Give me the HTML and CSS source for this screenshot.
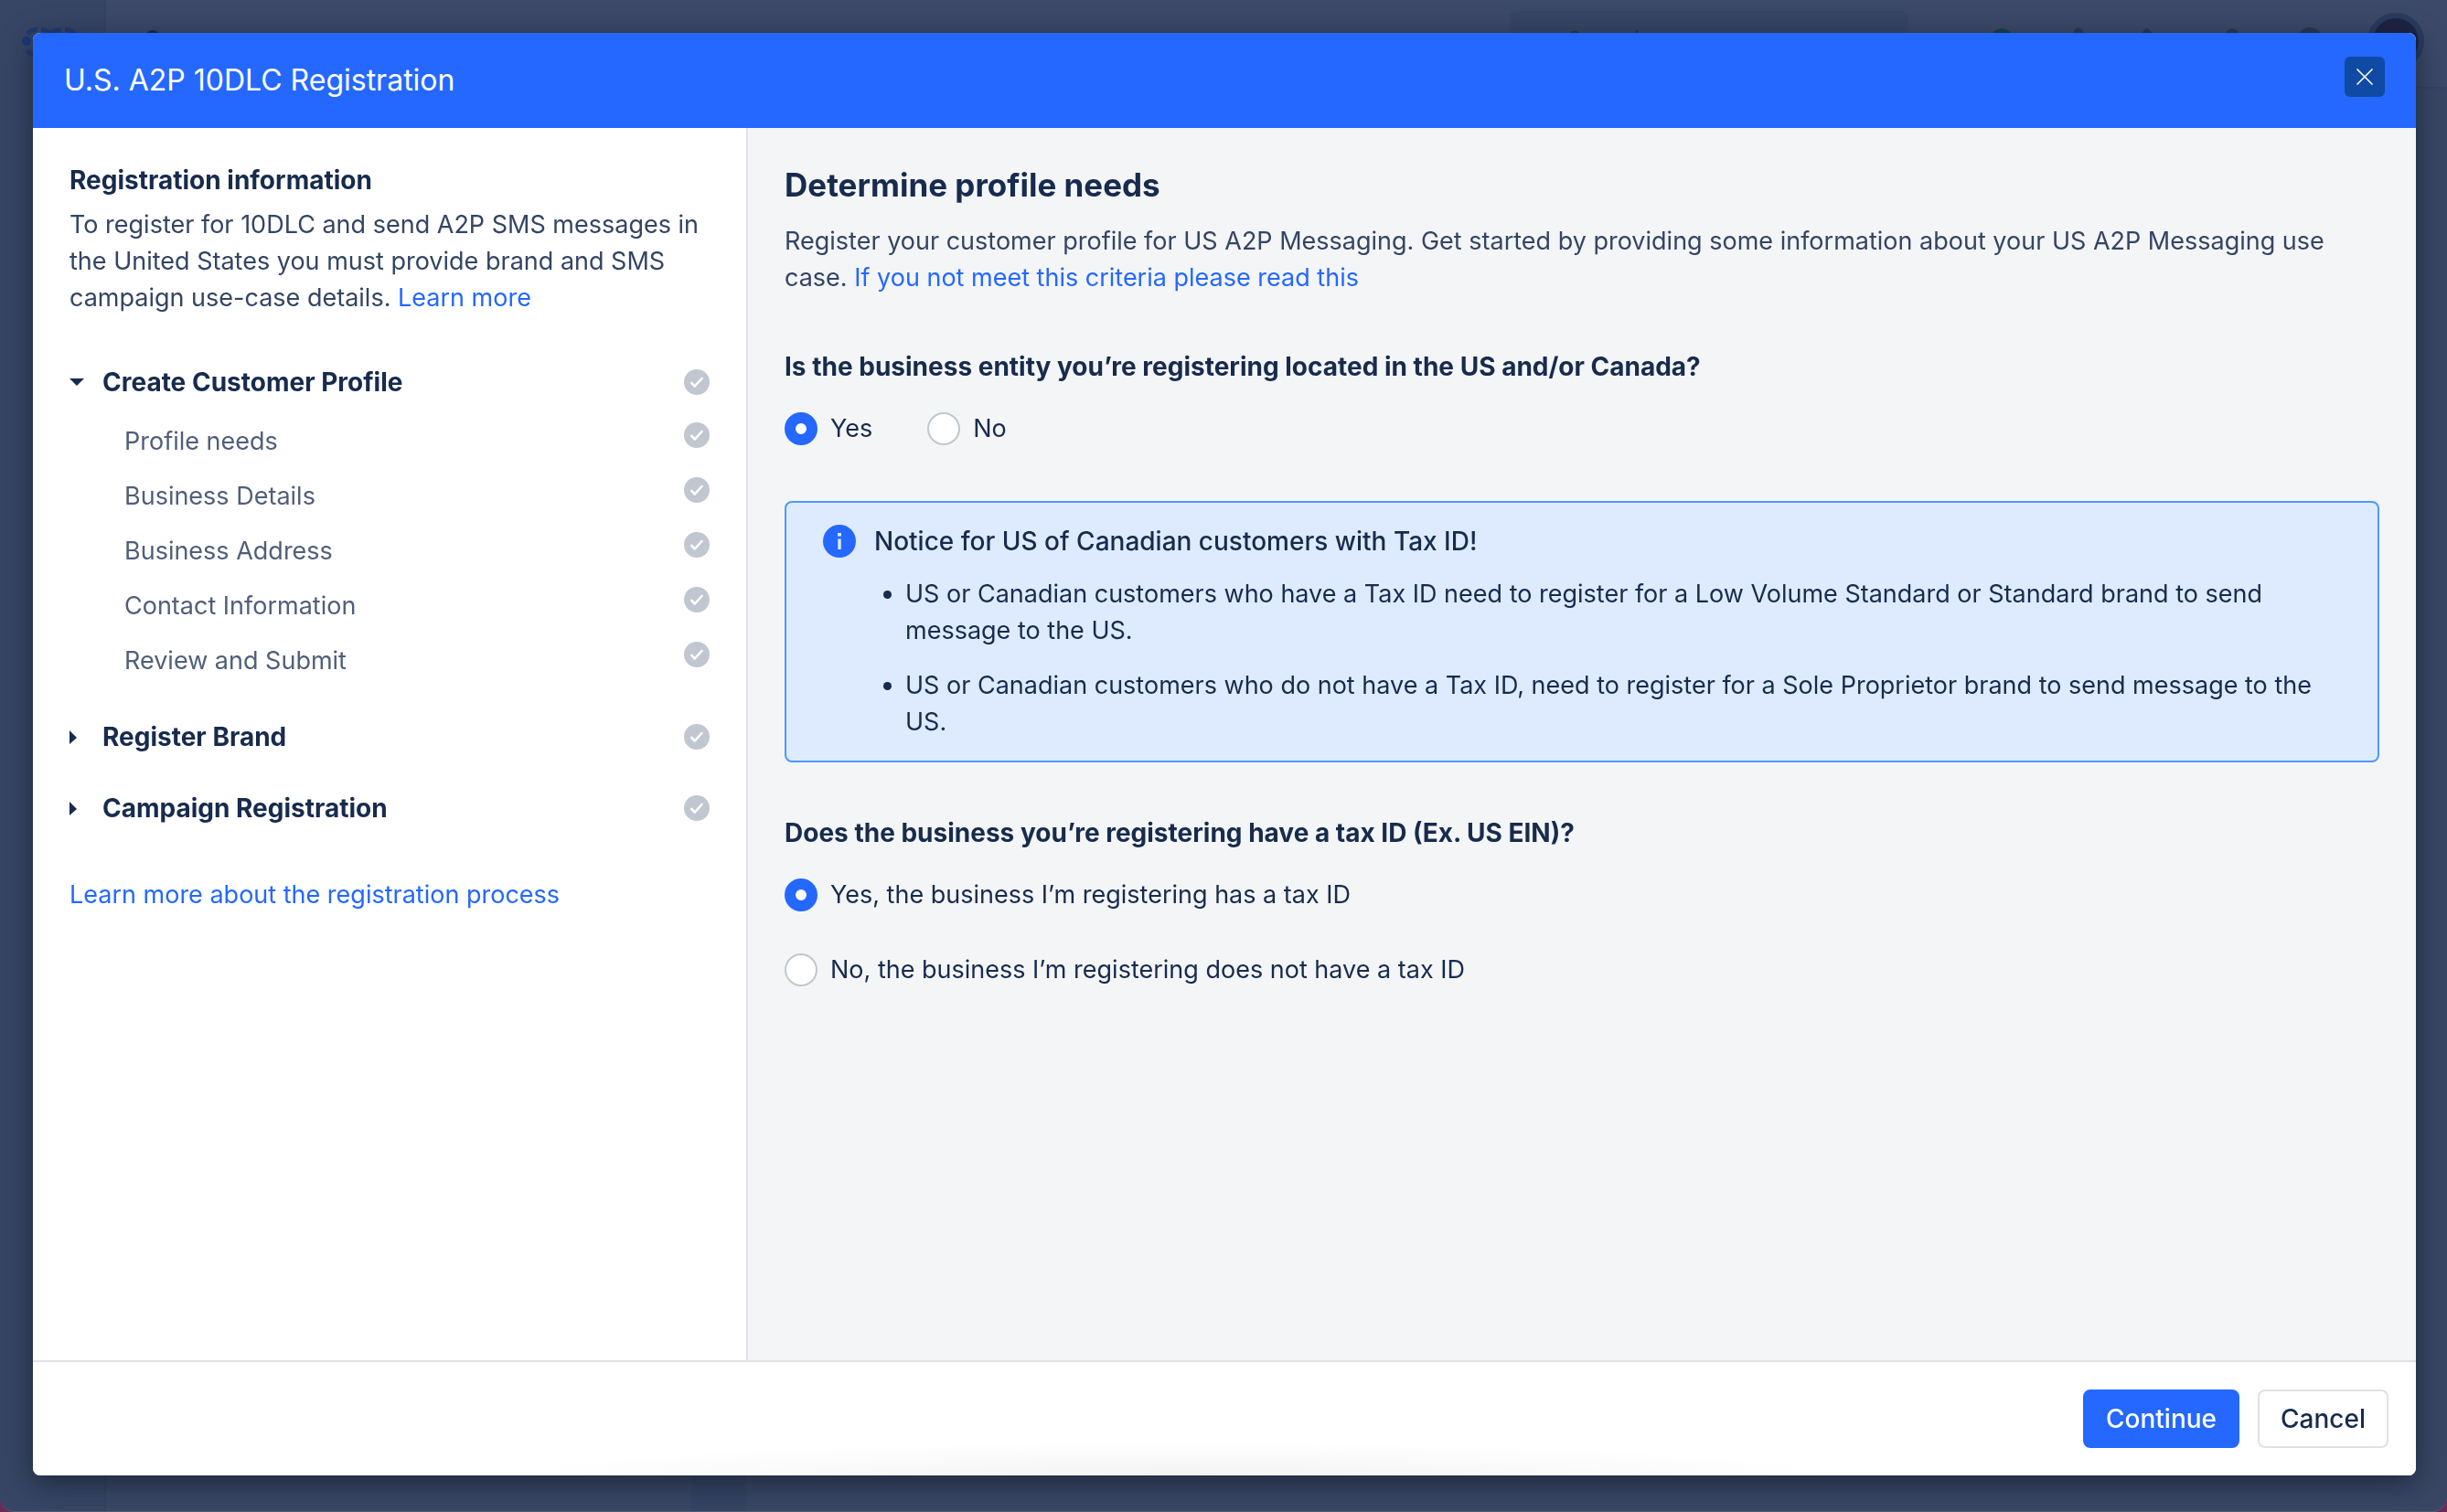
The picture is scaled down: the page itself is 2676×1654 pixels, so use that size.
FILE: index.html
```html
<!DOCTYPE html>
<html lang="en">
<head>
<meta charset="utf-8">
<meta name="viewport" content="width=device-width, initial-scale=1">
<title>U.S. A2P 10DLC Registration</title>
<link rel="stylesheet" href="styles.css">
</head>
<body>
<svg class="symbols" aria-hidden="true">
  <symbol id="check" viewBox="0 0 28 28">
    <circle cx="14" cy="14" r="14" fill="#c1c7d0"/>
    <path d="M8.300 14.800l3.500 3.700 7.700-8.500" fill="none" stroke="#fff" stroke-width="2.600" stroke-linecap="round" stroke-linejoin="round"/>
  </symbol>
</svg>

<div class="backdrop" aria-hidden="true">
  <div class="rail">
    <svg class="logo" viewBox="0 0 60 40">
      <g fill="none" stroke="#223a70" stroke-width="5">
        <path d="M6 7Q9 2.500 17 2.500"/><path d="M21 2.500Q28 2.500 31 8Q34 2.500 43 2.500"/><path d="M47 2.500Q55 2.500 58 7"/><path d="M6 25Q8 30 14 30"/>
      </g>
      <ellipse cx="5" cy="15" rx="5" ry="5" fill="#1c3876"/>
    </svg>
  </div>
  <div class="main">
    <div class="topbar">
      <span class="page-dot"></span>
      <span class="search">
        <svg viewBox="0 0 110 20"><circle cx="10" cy="21" r="8" fill="none" stroke="#27324e" stroke-width="2"/><path d="M48 7q5-5 10 0M121 3v5" fill="none" stroke="#27324e" stroke-width="2"/></svg>
      </span>
      <svg class="tools" viewBox="0 0 374 24">
        <circle cx="14" cy="13" r="12" fill="#17404b"/>
        <g fill="#2a3754"><path d="M90 10q8-20 16 0zM166 10q7-18 14 0zM256 10q10-18 20 0z"/><circle cx="351" cy="14" r="14"/></g>
      </svg>
      <span class="avatar"></span>
    </div>
    <div class="list-pane"></div>
  </div>
</div>

<main class="modal" role="dialog" aria-modal="true" aria-labelledby="modal-title">
  <header class="modal-header">
    <h1 id="modal-title">U.S. A2P 10DLC Registration</h1>
    <button class="close" type="button" aria-label="Close">
      <svg viewBox="0 0 20 20"><path d="M1.500 1.500l17 17M18.500 1.500l-17 17" stroke="#fff" stroke-width="1.600" fill="none"/></svg>
    </button>
  </header>

  <div class="modal-body">
    <aside class="sidebar">
      <h2 class="side-title">Registration information</h2>
      <p class="copy">To register for 10DLC and send A2P SMS messages in the United States you must provide brand and SMS campaign use-case details. <a href="#learn">Learn more</a></p>

      <nav class="steps" aria-label="Registration steps">
        <section class="group">
          <button class="group-head" type="button" aria-expanded="true">
            <svg class="caret" viewBox="0 0 16 16"><path d="M0 4h16l-8 8z"/></svg>
            <span>Create Customer Profile</span>
            <svg class="check"><use href="#check"/></svg>
          </button>
          <ul class="substeps">
            <li><a href="#needs">Profile needs</a><svg class="check"><use href="#check"/></svg></li>
            <li><a href="#details">Business Details</a><svg class="check"><use href="#check"/></svg></li>
            <li><a href="#address">Business Address</a><svg class="check"><use href="#check"/></svg></li>
            <li><a href="#contact">Contact Information</a><svg class="check"><use href="#check"/></svg></li>
            <li><a href="#review">Review and Submit</a><svg class="check"><use href="#check"/></svg></li>
          </ul>
        </section>
        <button class="group-head" type="button" aria-expanded="false">
          <svg class="caret" viewBox="0 0 16 16"><path d="M0 1v15l8-7z"/></svg>
          <span>Register Brand</span>
          <svg class="check"><use href="#check"/></svg>
        </button>
        <button class="group-head" type="button" aria-expanded="false">
          <svg class="caret" viewBox="0 0 16 16"><path d="M0 1v15l8-7z"/></svg>
          <span>Campaign Registration</span>
          <svg class="check"><use href="#check"/></svg>
        </button>
      </nav>
      <a class="process-link" href="#process">Learn more about the registration process</a>
    </aside>

    <form class="content" id="profile-form">
      <h2 class="content-title">Determine profile needs</h2>
      <p class="copy">Register your customer profile for US A2P Messaging. Get started by providing some information about your US A2P Messaging use case. <a href="#criteria">If you not meet this criteria please read this</a></p>

      <fieldset class="question">
        <legend>Is the business entity you’re registering located in the US and/or Canada?</legend>
        <div class="options options-row">
          <label><input type="radio" name="located" checked>Yes</label>
          <label><input type="radio" name="located">No</label>
        </div>
      </fieldset>

      <section class="notice">
        <svg class="info" viewBox="0 0 36 36"><circle cx="18" cy="18" r="18" fill="#2468ff"/><path d="M16 9h4v3.500h-4zM16.300 15.500h3.400V27h-3.400z" fill="#deebff"/></svg>
        <div>
          <h3>Notice for US of Canadian customers with Tax ID!</h3>
          <ul>
            <li>US or Canadian customers who have a Tax ID need to register for a Low Volume Standard or Standard brand to send message to the US.</li>
            <li>US or Canadian customers who do not have a Tax ID, need to register for a Sole Proprietor brand to send message to the US.</li>
          </ul>
        </div>
      </section>

      <fieldset class="question">
        <legend>Does the business you’re registering have a tax ID (Ex. US EIN)?</legend>
        <div class="options options-stack">
          <label><input type="radio" name="taxid" checked>Yes, the business I’m registering has a tax ID</label>
          <label><input type="radio" name="taxid">No, the business I’m registering does not have a tax ID</label>
        </div>
      </fieldset>
    </form>
  </div>

  <footer class="modal-footer">
    <button class="btn btn-primary" type="submit" form="profile-form">Continue</button>
    <button class="btn" type="button">Cancel</button>
  </footer>
</main>
</body>
</html>
```
FILE: styles.css
```css
* { box-sizing: border-box; }

html { background: #6d2a56; }
body {
  margin: 0;
  height: 100vh;
  padding: 36px 34px 40px 36px;
  display: flex;
  color: #172b4d;
  font: 400 27px/40px Inter, "Liberation Sans", sans-serif;
}

h1, h2, h3, p, ul, fieldset { margin: 0; padding: 0; }
a { color: #2468ff; text-decoration: none; }
button, input { font: inherit; color: inherit; margin: 0; }
.symbols { position: absolute; width: 0; height: 0; }

/* Dimmed application behind the dialog */
.backdrop {
  position: fixed;
  inset: 0;
  display: flex;
  overflow: hidden;
  border-bottom: 1px solid #525d74;
  border-radius: 0 0 16px 16px;
  background: #394765;
}
.rail {
  width: 116px;
  flex: none;
  padding: 30px 24px;
  background: #374665;
  border-right: 2px solid #354261;
}
.logo { width: 60px; height: 40px; display: block; }
.main { flex: 1; display: flex; flex-direction: column; }
.topbar {
  height: 97px;
  display: flex;
  align-items: flex-start;
  background: #3c4968;
  border-bottom: 2px solid #364362;
}
.list-pane {
  flex: 1;
  width: 700px;
  border-right: 60px solid #354463;
}
.page-dot {
  width: 16px;
  height: 16px;
  margin: 33px auto 0 43px;
  border-radius: 50%;
  background: #1d2947;
}
.search {
  width: 436px;
  height: 72px;
  margin: 12px 88px 0 0;
  padding: 18px;
  border-radius: 8px;
  background: #374665;
}
.search svg { width: 110px; height: 20px; display: block; overflow: visible; }
.tools { width: 374px; height: 24px; margin: 30px 40px 0 0; }
.avatar {
  width: 62px;
  height: 62px;
  margin: 14px 25px 0 0;
  border: 6px solid #2a3b60;
  border-radius: 50%;
  background: #1d2443;
}

.modal {
  position: relative;
  flex: 1;
  display: flex;
  flex-direction: column;
  border-radius: 8px;
  background: #fff;
  box-shadow: 0 8px 32px rgba(9, 14, 24, .55);
  overflow: hidden;
}
.modal-header {
  display: flex;
  justify-content: space-between;
  align-items: flex-start;
  padding: 26px 34px 32px;
  background: #2468ff;
}
.modal-header h1 {
  padding-top: 6px;
  color: #fff;
  font-size: 32px;
  font-weight: 400;
  line-height: 40px;
}
.close {
  width: 44px;
  height: 44px;
  padding: 12px;
  border: 0;
  border-radius: 6px;
  background: #0f4aa5;
}
.close svg { display: block; width: 20px; height: 20px; }

.modal-body { flex: 1; display: flex; }
.sidebar {
  width: 782px;
  flex: none;
  padding: 36px 40px;
  border-right: 2px solid #dfe1e6;
}
.side-title { margin-bottom: 8px; font-size: 28px; font-weight: 700; line-height: 42px; }
.copy { color: #344563; }

.steps { display: flex; flex-direction: column; gap: 38px; margin-top: 52px; }
.group-head {
  display: flex;
  align-items: center;
  width: 100%;
  padding: 0;
  border: 0;
  background: none;
  font-size: 28px;
  font-weight: 700;
  line-height: 40px;
  text-align: left;
}
.caret { width: 16px; height: 16px; margin-right: 20px; fill: #172b4d; }
.check { width: 28px; height: 28px; flex: none; margin-left: auto; }
.substeps { display: grid; gap: 10px; list-style: none; padding: 14px 0 6px 60px; }
.substeps li { display: flex; height: 50px; }
.substeps a { padding-top: 11px; color: #505f79; }
.substeps .check { margin-top: 10px; }
.process-link { display: inline-block; margin-top: 55px; }

.content { flex: 1; padding: 40px; background: #f4f5f7; }
.content-title { font-size: 35px; font-weight: 700; line-height: 44px; margin-bottom: 20px; }
.question { border: 0; min-width: 0; margin-top: 57px; }
.question legend { padding: 0; font-size: 28px; font-weight: 700; }
.options { display: flex; }
.options-row { gap: 60px; padding-top: 28px; }
.options-stack { flex-direction: column; gap: 42px; padding-top: 28px; }
.options label { display: flex; align-items: center; gap: 14px; }
.options input {
  appearance: none;
  width: 36px;
  height: 36px;
  border: 2px solid #c1c7d0;
  border-radius: 50%;
  background: #fff;
}
.options input:checked { border: 12px solid #2468ff; }

.notice {
  display: flex;
  gap: 20px;
  margin-top: 59px;
  padding: 22px 40px;
  border: 2px solid #4c9aff;
  border-radius: 8px;
  background: #deebff;
}
.info { width: 36px; height: 36px; flex: none; margin-top: 2px; }
.notice h3 { font-size: 28px; font-weight: 500; }
.notice ul { display: grid; gap: 20px; margin-top: 18px; padding-left: 34px; }

.modal-footer {
  display: flex;
  justify-content: flex-end;
  gap: 20px;
  padding: 30px;
  border-top: 2px solid #dfe1e6;
  background: radial-gradient(ellipse 28% 36px at 48% 100%, #f3f3f3, #fff);
}
.btn {
  height: 64px;
  padding: 0 23px;
  border: 2px solid #dfe1e6;
  border-radius: 8px;
  background: #fff;
  font-size: 28px;
  font-weight: 500;
}
.btn-primary { border-color: #2468ff; background: #2468ff; color: #fff; }
```
